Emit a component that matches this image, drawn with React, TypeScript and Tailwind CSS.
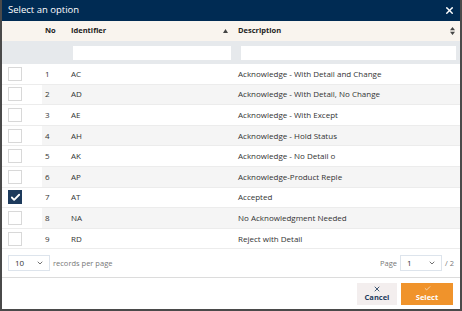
import { ChevronDown, Check, X } from "lucide-react";

const rows = [
  { no: 1, id: "AC", desc: "Acknowledge - With Detail and Change" },
  { no: 2, id: "AD", desc: "Acknowledge - With Detail, No Change" },
  { no: 3, id: "AE", desc: "Acknowledge - With Except" },
  { no: 4, id: "AH", desc: "Acknowledge - Hold Status" },
  { no: 5, id: "AK", desc: "Acknowledge - No Detail o" },
  { no: 6, id: "AP", desc: "Acknowledge-Product Reple" },
  { no: 7, id: "AT", desc: "Accepted", checked: true },
  { no: 8, id: "NA", desc: "No Acknowledgment Needed" },
  { no: 9, id: "RD", desc: "Reject with Detail" },
];

const cols = "grid grid-cols-[40px_25px_166px_1fr]";

export default function App() {
  return (
    <div className="w-[462px] h-[311px] flex flex-col bg-white border-x-2 border-b-2 border-[#4a4a4a] font-['Open_Sans',sans-serif] text-[8px] text-[#333]">
      {/* title bar */}
      <div className="h-[21px] shrink-0 bg-[#002b53] flex items-center justify-between pl-[6px] pr-[5px] text-white">
        <span className="text-[9.5px]">Select an option</span>
        <X size={11} strokeWidth={3} />
      </div>

      {/* column headers */}
      <div className={`${cols} h-[20px] bg-[#f9f4ee] items-center font-bold text-[7.5px] text-[#222]`}>
        <div />
        <div className="pl-[3px]">No</div>
        <div className="pl-[4px] pr-[5px] flex items-center justify-between">
          <span>Identifier</span>
          <svg width="5" height="4" viewBox="0 0 5 4" className="fill-[#444]">
            <path d="M2.5 0 L5 4 L0 4 Z" />
          </svg>
        </div>
        <div className="pl-[5px] pr-[5px] flex items-center justify-between">
          <span>Description</span>
          <svg width="5" height="8" viewBox="0 0 5 8" className="fill-[#444]">
            <path d="M2.5 0 L5 3.3 L0 3.3 Z M2.5 8 L5 4.7 L0 4.7 Z" />
          </svg>
        </div>
      </div>

      {/* filters */}
      <div className={`${cols} h-[23px] bg-[#e6e9ec] items-center`}>
        <div />
        <div />
        <div className="pl-[6px] pr-[2px]">
          <div className="h-[14px] bg-white" />
        </div>
        <div className="pl-[8px] pr-[4px]">
          <div className="h-[14px] bg-white" />
        </div>
      </div>

      {/* rows */}
      <div className="flex flex-col">
        {rows.map((r, i) => (
          <div
            key={r.no}
            className={`${cols} h-[20.6px] items-center border-b border-[#ececec] ${i % 2 === 1 ? "bg-[linear-gradient(to_right,white_40px,#f5f5f5_40px)]" : "bg-white"}`}
          >
            <div className="pl-[6px]">
              {r.checked ? (
                <div className="w-[14px] h-[14px] bg-[#1d3a5c] flex items-center justify-center">
                  <Check size={11} strokeWidth={4} className="text-white" />
                </div>
              ) : (
                <div className="w-[14px] h-[14px] border border-[#d8d8d8] bg-white" />
              )}
            </div>
            <div className="pl-[3px]">{r.no}</div>
            <div className="pl-[4px]">{r.id}</div>
            <div className="pl-[5px]">{r.desc}</div>
          </div>
        ))}
      </div>

      {/* pagination */}
      <div className="h-[29px] flex items-center justify-between pl-[6px] pr-[6px] border-b border-[#dcdcdc] text-[7.5px] text-[#777]">
        <div className="flex items-center gap-[3px]">
          <div className="w-[42px] h-[16px] border border-[#dde4ec] flex items-center justify-between pl-[6px] pr-[5px] text-[8px] text-[#333]">
            <span>10</span>
            <ChevronDown size={8} strokeWidth={2.5} className="text-[#555]" />
          </div>
          <span>records per page</span>
        </div>
        <div className="flex items-center gap-[3px]">
          <span>Page</span>
          <div className="w-[42px] h-[16px] border border-[#dde4ec] flex items-center justify-between pl-[6px] pr-[5px] text-[8px] text-[#333]">
            <span>1</span>
            <ChevronDown size={8} strokeWidth={2.5} className="text-[#555]" />
          </div>
          <span>/ 2</span>
        </div>
      </div>

      {/* footer */}
      <div className="flex-1 flex items-center justify-end gap-[4px] pr-[7px]">
        <button className="w-[40px] h-[22px] bg-[#f3eeee] flex flex-col items-center justify-center leading-none text-[#1d3a5c] font-bold">
          <X size={8} strokeWidth={2.5} />
          <span className="text-[7.5px] mt-[1px]">Cancel</span>
        </button>
        <button className="w-[52px] h-[22px] bg-[#f0932b] flex flex-col items-center justify-center leading-none text-white font-bold">
          <Check size={7} strokeWidth={2} />
          <span className="text-[7.5px] mt-[2px]">Select</span>
        </button>
      </div>
    </div>
  );
}
